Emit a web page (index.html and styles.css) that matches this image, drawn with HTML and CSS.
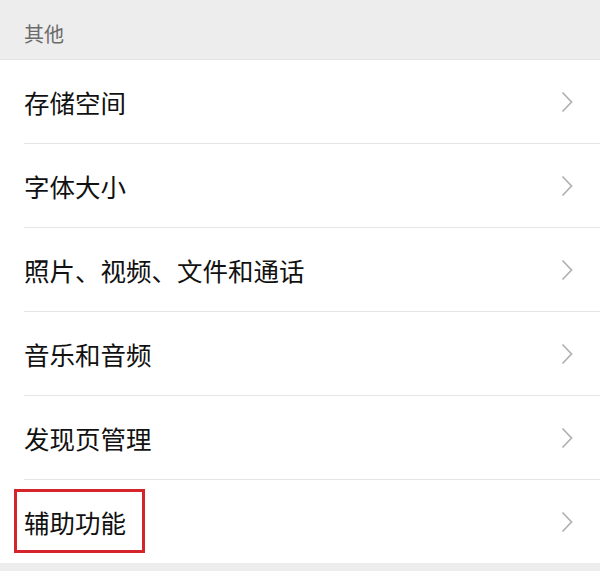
FILE: index.html
```html
<!DOCTYPE html>
<html lang="zh-CN">
<head>
    <meta charset="UTF-8">
    <meta name="viewport" content="width=device-width, initial-scale=1.0">
    <title>设置</title>
    <link rel="stylesheet" href="styles.css">
</head>
<body>
    <div class="section-title">其他</div>
    <div class="list">
        <div class="row"><div class="row-inner"><span class="label">存储空间</span><svg class="arrow" viewBox="0 0 12 22"><polyline points="1.5,1.5 10.5,11 1.5,20.5"/></svg></div></div>
        <div class="row"><div class="row-inner"><span class="label">字体大小</span><svg class="arrow" viewBox="0 0 12 22"><polyline points="1.5,1.5 10.5,11 1.5,20.5"/></svg></div></div>
        <div class="row"><div class="row-inner"><span class="label">照片、视频、文件和通话</span><svg class="arrow" viewBox="0 0 12 22"><polyline points="1.5,1.5 10.5,11 1.5,20.5"/></svg></div></div>
        <div class="row"><div class="row-inner"><span class="label">音乐和音频</span><svg class="arrow" viewBox="0 0 12 22"><polyline points="1.5,1.5 10.5,11 1.5,20.5"/></svg></div></div>
        <div class="row"><div class="row-inner"><span class="label">发现页管理</span><svg class="arrow" viewBox="0 0 12 22"><polyline points="1.5,1.5 10.5,11 1.5,20.5"/></svg></div></div>
        <div class="row last">
            <div class="row-inner"><span class="label">辅助功能</span><svg class="arrow" viewBox="0 0 12 22"><polyline points="1.5,1.5 10.5,11 1.5,20.5"/></svg></div>
            <div class="highlight"></div>
        </div>
    </div>
</body>
</html>
```

FILE: styles.css
```css
body {
    margin: 0;
    background-color: #ededed;
    font-family: "Noto Sans CJK SC", "Noto Sans", sans-serif;
}
.section-title {
    height: 60px;
    box-sizing: border-box;
    padding: 20px 0 0 24px;
    font-size: 20px;
    line-height: 28px;
    color: #6b6b6b;
    border-bottom: 1px solid #e2e2e2;
}
.list {
    background-color: #fff;
}
.row {
    position: relative;
    padding-left: 24px;
}
.row-inner {
    height: 84px;
    box-sizing: border-box;
    display: flex;
    align-items: center;
    justify-content: space-between;
    padding-right: 27px;
    border-bottom: 1px solid #e6e6e6;
}
.row.last .row-inner {
    height: 83px;
    border-bottom: none;
}
.label {
    font-size: 25.5px;
    line-height: 34px;
    color: #111;
}
.arrow {
    width: 12px;
    height: 22px;
    fill: none;
    stroke: #b3b3b3;
    stroke-width: 1.8;
}
.highlight {
    position: absolute;
    left: 14px;
    top: 9px;
    width: 131px;
    height: 64px;
    box-sizing: border-box;
    border: 3px solid #d6242d;
}
```
